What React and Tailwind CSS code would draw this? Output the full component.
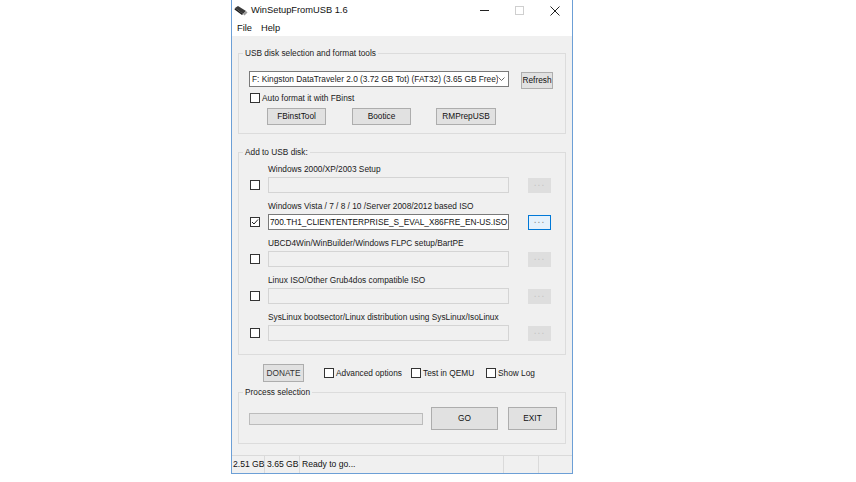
import React from 'react';

const rows = [
  { label: 'Windows 2000/XP/2003 Setup' },
  {
    label: 'Windows Vista / 7 / 8 / 10 /Server 2008/2012 based ISO',
    checked: true,
    value: '700.TH1_CLIENTENTERPRISE_S_EVAL_X86FRE_EN-US.ISO',
  },
  { label: 'UBCD4Win/WinBuilder/Windows FLPC setup/BartPE' },
  { label: 'Linux ISO/Other Grub4dos compatible ISO' },
  { label: 'SysLinux bootsector/Linux distribution using SysLinux/IsoLinux' },
];

const CheckBox = ({ checked }) => (
  <div className="w-[10px] h-[10px] border border-[#333] bg-white flex items-center justify-center shrink-0">
    {checked && (
      <svg width="8" height="8" viewBox="0 0 8 8">
        <path d="M1 4 L3 6 L7 1.5" fill="none" stroke="#222" strokeWidth="1" />
      </svg>
    )}
  </div>
);

const Btn = ({ className = '', children }) => (
  <div
    className={`flex items-center justify-center bg-[#e1e1e1] border border-[#adadad] text-[#111] text-[8.3px] shrink-0 ${className}`}
  >
    {children}
  </div>
);

const App = () => {
  return (
    <div className="w-[856px] h-[482px] bg-white font-['Liberation_Sans',Arial,sans-serif] text-[#1a1a1a]">
      <div className="ml-[231px] w-[342px] h-[474px] border-x border-b border-[#6c9fd6] flex flex-col">
        {/* title bar */}
        <div className="h-[21px] bg-white flex items-center shrink-0">
          <svg className="ml-[2px]" width="14" height="12" viewBox="0 0 14 12">
            <path d="M1 3 L4 1 L12 6 L9 9 Z" fill="#3a3a3a" />
            <path d="M9 9 L12 6 L13.5 7.5 L10.5 10.5 Z" fill="#9a9a9a" />
            <path d="M1 3 L9 9 L8 10 L0.5 4.5 Z" fill="#1c1c1c" />
          </svg>
          <span className="ml-[3px] text-[9.3px] text-[#111]">WinSetupFromUSB 1.6</span>
          <div className="ml-auto flex h-full">
            <div className="w-[35px] flex items-center justify-center">
              <div className="w-[9px] h-px bg-[#222]" />
            </div>
            <div className="w-[35px] flex items-center justify-center">
              <div className="w-[9px] h-[9px] border border-[#cfcfcf]" />
            </div>
            <div className="w-[35px] flex items-center justify-center">
              <svg width="10" height="10" viewBox="0 0 10 10">
                <path d="M0.5 0.5 L9.5 9.5 M9.5 0.5 L0.5 9.5" stroke="#222" strokeWidth="1" />
              </svg>
            </div>
          </div>
        </div>

        {/* menu */}
        <div className="h-[15px] bg-white flex items-center text-[9.3px] text-[#111] shrink-0">
          <span className="ml-[5px]">File</span>
          <span className="ml-[9px]">Help</span>
        </div>

        {/* body */}
        <div className="flex-1 bg-[#f0f0f0] px-[6px] flex flex-col text-[8.3px]">
          {/* usb disk group */}
          <fieldset className="mt-[11px] border border-[#dcdcdc] pb-[8px]">
            <legend className="ml-[4px] px-[2px] leading-[12px] text-[#222]">
              USB disk selection and format tools
            </legend>
            <div className="flex items-start mt-[12px] pl-[10px]">
              <div className="w-[260px] h-[16px] bg-white border border-[#7a7a7a] flex items-center overflow-hidden">
                <span className="ml-[2px] whitespace-nowrap overflow-hidden w-[248px] leading-[14px]">
                  F: Kingston DataTraveler 2.0 (3.72 GB Tot) (FAT32) (3.65 GB Free)
                </span>
                <svg className="ml-auto mr-[3px] shrink-0" width="7" height="5" viewBox="0 0 7 5">
                  <path d="M0.5 0.5 L3.5 3.5 L6.5 0.5" fill="none" stroke="#555" strokeWidth="0.9" />
                </svg>
              </div>
              <Btn className="ml-[12px] mt-[1px] w-[32px] h-[17px]">Refresh</Btn>
            </div>
            <div className="flex items-center h-[12px] mt-[3px] pl-[11px]">
              <CheckBox />
              <span className="ml-[2px]">Auto format it with FBinst</span>
            </div>
            <div className="flex mt-[4px] pl-[28px]">
              <Btn className="w-[59px] h-[17px]">FBinstTool</Btn>
              <Btn className="ml-[26px] w-[59px] h-[17px]">Bootice</Btn>
              <Btn className="ml-[25px] w-[60px] h-[17px]">RMPrepUSB</Btn>
            </div>
          </fieldset>

          {/* add to usb group */}
          <fieldset className="mt-[12px] border border-[#dcdcdc] pb-[13px]">
            <legend className="ml-[4px] px-[2px] leading-[12px] text-[#222]">Add to USB disk:</legend>
            {rows.map((row, i) => (
              <div key={row.label} className={i === 0 ? 'mt-[5px]' : 'mt-[7px]'}>
                <div className="pl-[29px] h-[14px] leading-[13px] whitespace-nowrap">{row.label}</div>
                <div className="flex items-center h-[16px] pl-[11px]">
                  <CheckBox checked={row.checked} />
                  {row.value ? (
                    <div className="ml-[8px] w-[241px] h-[16px] bg-white border border-[#7a7a7a] flex items-center overflow-hidden">
                      <span className="ml-[1px] whitespace-nowrap leading-[14px] text-[#111]">{row.value}</span>
                    </div>
                  ) : (
                    <div className="ml-[8px] w-[241px] h-[16px] bg-[#f0f0f0] border border-[#d4d4d4]" />
                  )}
                  {row.checked ? (
                    <div className="ml-[19px] w-[23px] h-[15px] bg-[#e5f1fb] border border-[#0078d7] flex items-center justify-center text-[10px] tracking-[1px] text-[#888] leading-none pb-[4px]">
                      ...
                    </div>
                  ) : (
                    <div className="ml-[19px] w-[23px] h-[15px] bg-[#dedede] flex items-center justify-center text-[10px] tracking-[1px] text-[#c4c4c4] leading-none pb-[4px]">
                      ...
                    </div>
                  )}
                </div>
              </div>
            ))}
          </fieldset>

          {/* donate + options */}
          <div className="flex items-center mt-[9px] h-[18px]">
            <Btn className="ml-[25px] w-[41px] h-[18px] text-[#333]">DONATE</Btn>
            <div className="ml-[20px] w-[87px] flex items-center">
              <CheckBox />
              <span className="ml-[2px] whitespace-nowrap">Advanced options</span>
            </div>
            <div className="w-[75px] flex items-center">
              <CheckBox />
              <span className="ml-[2px] whitespace-nowrap">Test in QEMU</span>
            </div>
            <div className="flex items-center">
              <CheckBox />
              <span className="ml-[2px] whitespace-nowrap">Show Log</span>
            </div>
          </div>

          {/* process selection */}
          <fieldset className="mt-[4px] border border-[#dcdcdc] pb-[13px]">
            <legend className="ml-[4px] px-[2px] leading-[12px] text-[#222]">Process selection</legend>
            <div className="flex items-center mt-[9px] pl-[10px]">
              <div className="w-[174px] h-[12px] bg-[#e6e6e6] border border-[#bcbcbc]" />
              <Btn className="ml-[8px] w-[67px] h-[23px]">GO</Btn>
              <Btn className="ml-[10px] w-[49px] h-[23px]">EXIT</Btn>
            </div>
          </fieldset>
        </div>

        {/* status bar */}
        <div className="h-[18px] bg-[#f0f0f0] border-t border-[#dadada] flex items-stretch text-[8.6px] text-[#111] whitespace-nowrap shrink-0">
          <div className="w-[33px] pl-px flex items-center border-r border-[#dadada]">2.51 GB</div>
          <div className="w-[35px] pl-[2px] flex items-center border-r border-[#dadada]">3.65 GB</div>
          <div className="w-[204px] pl-[2px] flex items-center border-r border-[#dadada]">Ready to go...</div>
          <div className="w-[35px] border-r border-[#dadada]" />
          <div className="flex-1" />
        </div>
      </div>
    </div>
  );
};

export default App;
